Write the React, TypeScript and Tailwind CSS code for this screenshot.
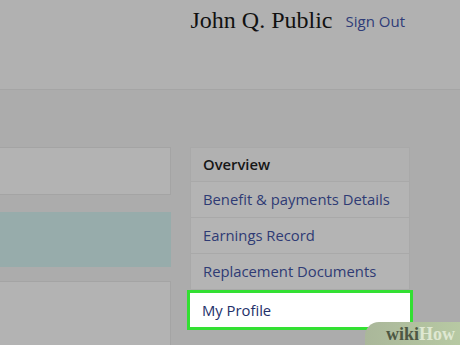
import React from 'react';

const sideItems = ['Benefit & payments Details', 'Earnings Record', 'Replacement Documents'];

/**
 * Account page with side navigation, greyed out, "My Profile" highlighted
 */
export default function App() {
  return (
    <div className="relative w-[460px] h-[345px] overflow-hidden bg-[#acacac] font-['Open_Sans',sans-serif]">
      {/* Header */}
      <header className="h-[90px] bg-[#b1b1b1] border-b border-[#a5a5a5] flex justify-end items-start pr-[55px] pt-[4px] gap-[13px]">
        <span className="font-['Liberation_Serif',serif] text-[24px] text-[#111] leading-[32px]">John Q. Public</span>
        <span className="text-[15px] text-[#2f3c78] leading-[32px] mt-[1px]">Sign Out</span>
      </header>

      <div className="flex pt-[57px]">
        {/* Main content (left) */}
        <div className="w-[171px] flex flex-col">
          <div className="h-[48px] bg-[#b3b3b3] border-y border-r border-[#a4a4a4]" />
          <div className="h-[55px] mt-[17px] bg-[#97acab]" />
          <div className="h-[120px] mt-[14px] bg-[#b3b3b3] border-y border-r border-[#a4a4a4]" />
        </div>

        {/* Side nav */}
        <nav className="w-[220px] ml-[19px] flex flex-col">
          <div className="h-[35px] flex items-center px-[12px] bg-[#b1b1b1] border border-[#a9a9a9] text-[14.8px] font-semibold text-[#161616]">
            Overview
          </div>
          {sideItems.map((label) => (
            <div
              key={label}
              className="h-[36px] flex items-center px-[12px] bg-[#b4b4b4] border-x border-b border-[#a9a9a9] text-[14.8px] text-[#2f3b74]"
            >
              {label}
            </div>
          ))}
          <div className="h-[40px] -mx-[3px] flex items-center px-[12px] pt-[1px] bg-white border-[3px] border-[#33e033] text-[14.8px] text-[#23306a]">
            My Profile
          </div>
        </nav>
      </div>

      {/* wikiHow watermark */}
      <div className="absolute right-0 bottom-0 w-[95px] h-[23px] rounded-tl-[14px] bg-gradient-to-r from-[#aab79a] to-[#b7c9a3] flex items-end justify-end pr-[5px] pb-[1px]">
        <span className="font-['Liberation_Serif',serif] font-bold text-[18px] leading-[19px] text-[#4d5743]">wiki</span>
        <span className="font-['Liberation_Serif',serif] font-bold text-[18px] leading-[19px] text-[#dfe8d2]">How</span>
      </div>
    </div>
  );
}
